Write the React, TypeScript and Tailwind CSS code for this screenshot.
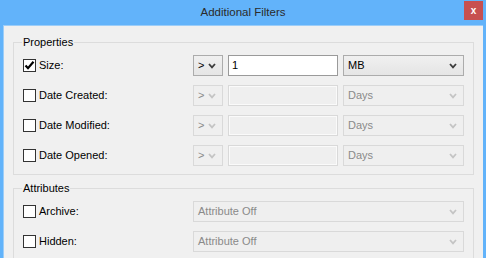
import React from "react";

type RowType = { id: number; label: string; checked: boolean; unit: string };

const Chevron = ({ disabled }: { disabled?: boolean }) => (
  <svg width="8" height="6" viewBox="0 0 8 6" className="shrink-0">
    <path d="M1 1 L4 4.3 L7 1" fill="none" stroke={disabled ? "#c4c4c4" : "#3c3c3c"} strokeWidth="1.8" />
  </svg>
);

const Combo = ({ text, width, disabled }: { text: string; width: string; disabled?: boolean }) => (
  <div
    className={`${width} h-[21px] flex items-center justify-between pl-[4px] pr-[6px] border ${
      disabled ? "border-[#d9d9d9] bg-[#efefef] text-[#8a8a8a]" : "border-[#acacac] bg-gradient-to-b from-[#f0f0f0] to-[#e5e5e5] text-[#000]"
    }`}
  >
    <span>{text}</span>
    <Chevron disabled={disabled} />
  </div>
);

const CheckBox = ({ checked }: { checked: boolean }) => (
  <div className="w-[13px] h-[13px] border border-[#333] bg-white flex items-center justify-center shrink-0">
    {checked && (
      <svg width="11" height="11" viewBox="0 0 11 11">
        <path d="M1.5 5.5 L4 8.2 L9.5 1.8" fill="none" stroke="#000" strokeWidth="2.2" />
      </svg>
    )}
  </div>
);

const App = () => {
  const rows: RowType[] = [
    { id: 1, label: "Size:", checked: true, unit: "MB" },
    { id: 2, label: "Date Created:", checked: false, unit: "Days" },
    { id: 3, label: "Date Modified:", checked: false, unit: "Days" },
    { id: 4, label: "Date Opened:", checked: false, unit: "Days" },
  ];
  const attrs = ["Archive:", "Hidden:"];

  return (
    <div className="w-[486px] h-[258px] overflow-hidden bg-[#62b3fa] flex flex-col px-[3px] text-[11px] font-['Liberation_Sans',Arial,sans-serif] leading-[13px]">
      {/* title bar */}
      <div className="h-[25px] flex items-start shrink-0">
        <div className="w-[19px]"></div>
        <div className="flex-1 h-[25px] flex items-center justify-center text-[11.5px] text-[#2b2b2b]">Additional Filters</div>
        <div className="w-[19px] h-[19px] mt-[1px] bg-[#c75050] flex items-center justify-center text-white font-bold text-[10px]">x</div>
      </div>

      {/* body */}
      <div className="flex-1 bg-[#f0f0f0] border-l border-t border-[#9ccdf8] pl-[9px] pr-[10px] pt-[10px]">
        <fieldset className="border border-[#dcdcdc] px-[9px] pb-[8px] pt-[6px]">
          <legend className="px-[1px] -ml-[1px]">Properties</legend>
          <div className="flex flex-col gap-[9px]">
            {rows.map((item) => {
              const disabled = !item.checked;
              return (
                <div key={item.id} className="flex items-center h-[21px]">
                  <div className="w-[170px] flex items-center gap-[3px]">
                    <CheckBox checked={item.checked} />
                    <span className="text-black">{item.label}</span>
                  </div>
                  <Combo text=">" width="w-[30px]" disabled={disabled} />
                  <div
                    className={`ml-[5px] w-[110px] h-[21px] border flex items-center px-[3px] ${
                      disabled ? "border-[#d9d9d9] bg-[#efefef] shadow-[inset_0_0_0_1px_#fafafa]" : "border-[#9a9a9a] bg-white"
                    }`}
                  >
                    {!disabled && <span className="text-black">1</span>}
                  </div>
                  <div className="ml-[5px]">
                    <Combo text={item.unit} width="w-[121px]" disabled={disabled} />
                  </div>
                </div>
              );
            })}
          </div>
        </fieldset>

        <fieldset className="mt-[7px] border border-[#dcdcdc] px-[9px] pb-[8px] pt-[6px]">
          <legend className="px-[1px] -ml-[1px]">Attributes</legend>
          <div className="flex flex-col gap-[9px]">
            {attrs.map((a, index) => (
              <div key={index} className="flex items-center h-[21px]">
                <div className="w-[170px] flex items-center gap-[3px]">
                  <CheckBox checked={false} />
                  <span className="text-black">{a}</span>
                </div>
                <Combo text="Attribute Off" width="w-[271px]" disabled />
              </div>
            ))}
          </div>
        </fieldset>
      </div>
    </div>
  );
};

export default App;
